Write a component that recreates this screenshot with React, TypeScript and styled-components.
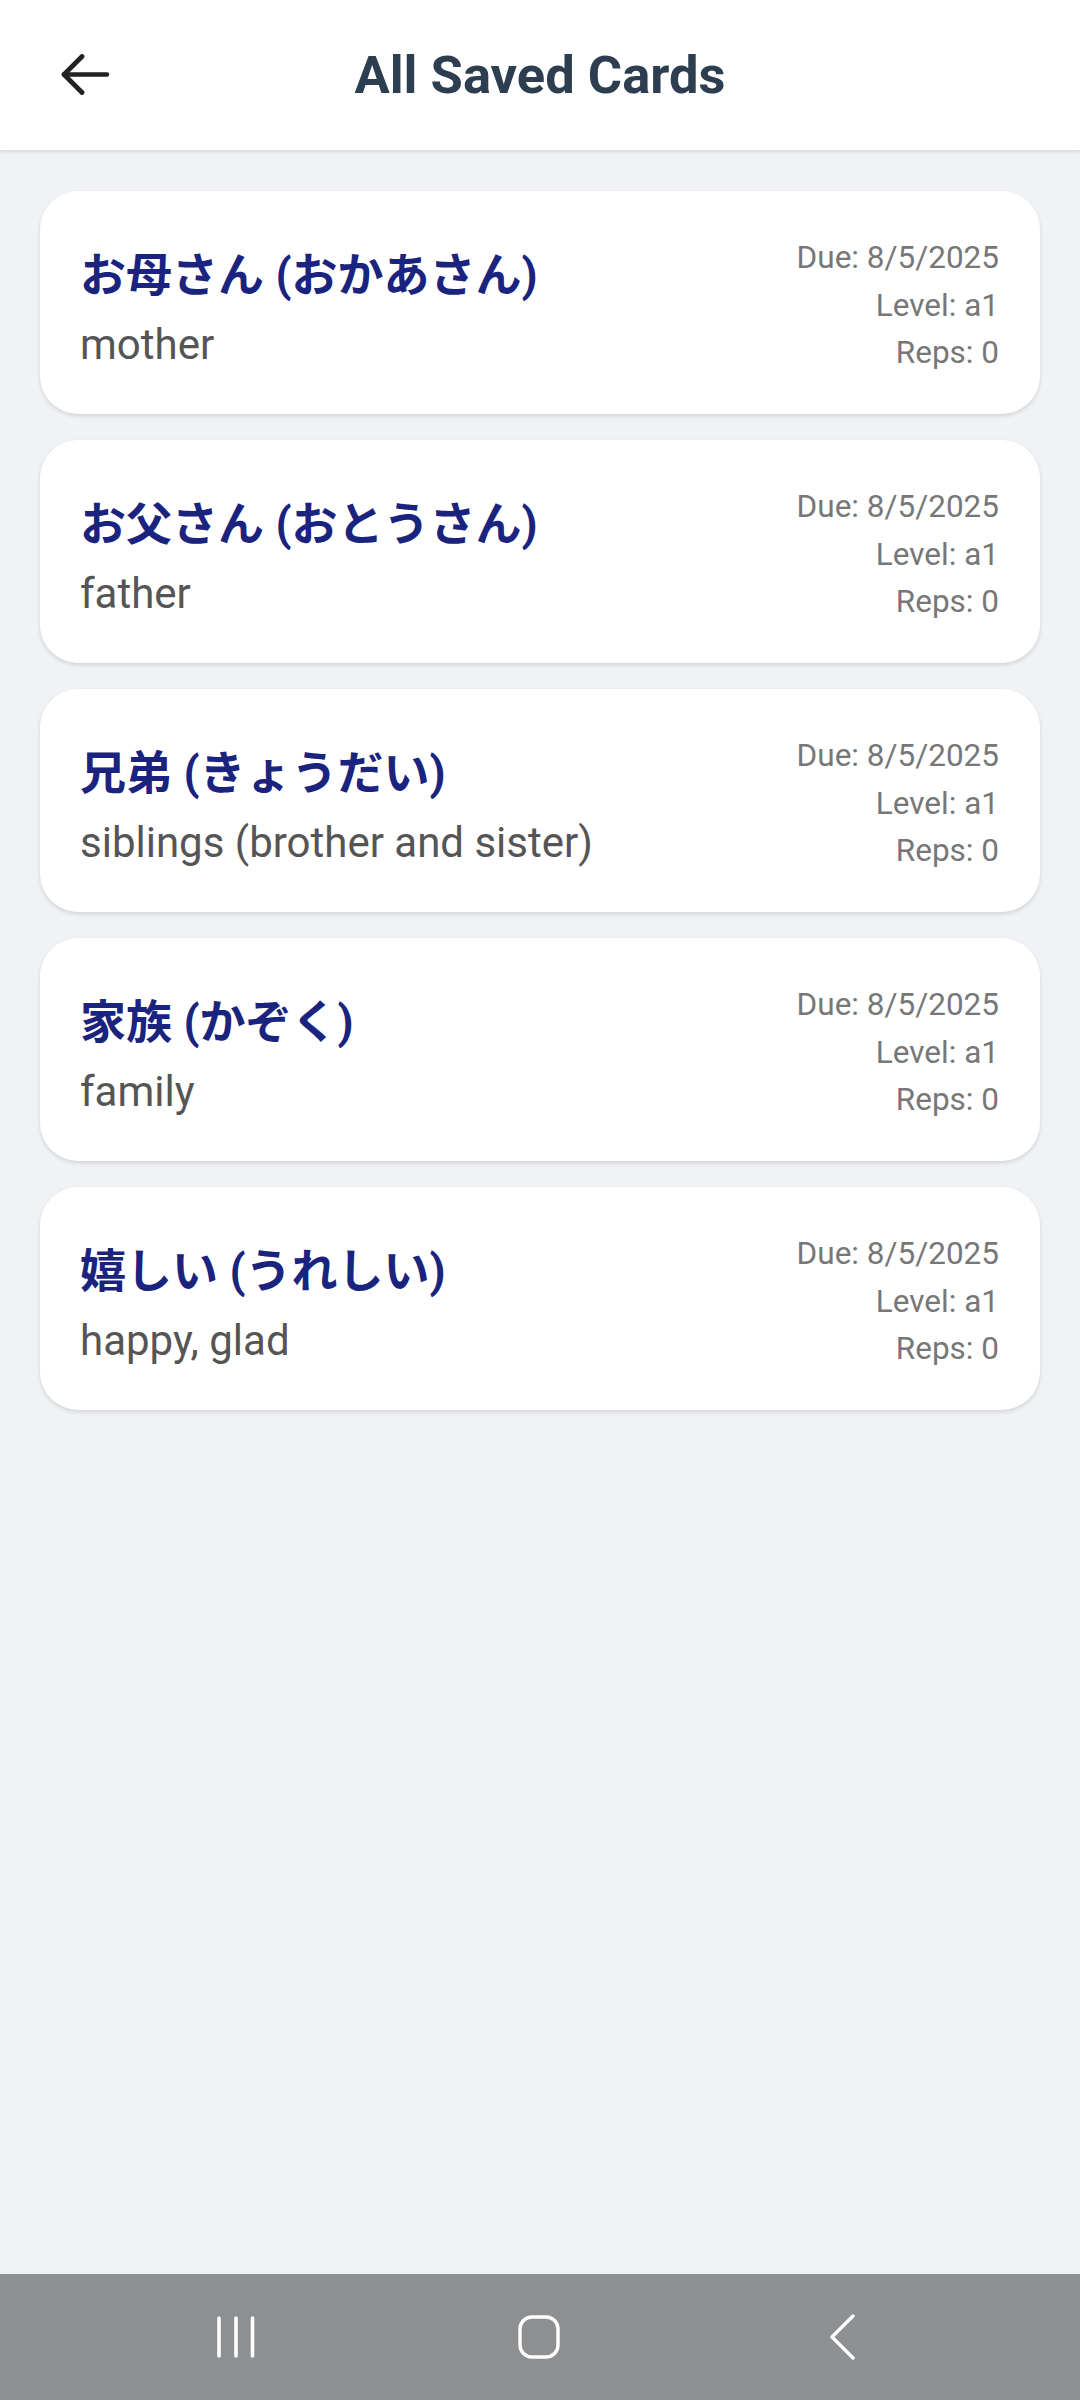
import React from "react";
import styled, { createGlobalStyle } from "styled-components";

const GlobalStyle = createGlobalStyle`
  html, body {
    margin: 0;
    padding: 0;
    background: #f0f2f5;
  }
  * { box-sizing: border-box; }
  body {
    font-family: Roboto, "Noto Sans CJK JP", sans-serif;
  }
`;

const Screen = styled.div`
  width: 1080px;
  height: 2400px;
  display: flex;
  flex-direction: column;
  background: #f0f2f5;
`;

const Header = styled.header`
  height: 150px;
  flex-shrink: 0;
  background: #ffffff;
  display: grid;
  grid-template-columns: 1fr auto 1fr;
  align-items: center;
  box-shadow: 0 2px 3px rgba(0, 0, 0, 0.1);
  position: relative;
  z-index: 1;
`;

const BackButton = styled.button`
  justify-self: start;
  margin-left: 60px;
  width: 58px;
  height: 50px;
  border: none;
  background: transparent;
  padding: 0;
  display: flex;
  align-items: center;
  justify-content: flex-start;
  cursor: pointer;
`;

const Title = styled.h1`
  margin: 0;
  font-family: Roboto, "Noto Sans CJK JP", sans-serif;
  font-weight: 700;
  font-size: 52.5px;
  line-height: 62px;
  color: #2c3e50;
`;

const List = styled.main`
  flex: 1;
  display: flex;
  flex-direction: column;
  gap: 26px;
  padding: 41px 40px;
`;

const Card = styled.div`
  background: #ffffff;
  border-radius: 38px;
  min-height: 223px;
  padding: 0 41px 0 40px;
  display: flex;
  align-items: center;
  justify-content: space-between;
  box-shadow: 0 2px 4px rgba(0, 0, 0, 0.13);
`;

const Left = styled.div`
  display: flex;
  flex-direction: column;
  gap: 17px;
  margin-top: 12px;
`;

const Word = styled.div`
  font-family: Roboto, "Noto Sans CJK JP", sans-serif;
  font-weight: 700;
  font-size: 46px;
  line-height: 56px;
  color: #1a237e;
`;

const Meaning = styled.div`
  font-family: Roboto, sans-serif;
  font-size: 42px;
  line-height: 50px;
  color: #555555;
`;

const Meta = styled.div`
  display: flex;
  flex-direction: column;
  align-items: flex-end;
  margin-top: 6px;
`;

const MetaLine = styled.div`
  font-family: Roboto, sans-serif;
  font-size: 31.5px;
  line-height: 47.5px;
  color: #777777;
`;

const NavBar = styled.nav`
  height: 126px;
  flex-shrink: 0;
  background: #8e8f91;
  display: flex;
  align-items: center;
  justify-content: space-between;
  padding: 0 208px 0 206px;
`;

const NavSlot = styled.div`
  width: 60px;
  height: 60px;
  display: flex;
  align-items: center;
  justify-content: center;
`;

type CardData = {
  word: string;
  meaning: string;
  due: string;
  level: string;
  reps: number;
};

const cards: CardData[] = [
  { word: "お母さん (おかあさん)", meaning: "mother", due: "8/5/2025", level: "a1", reps: 0 },
  { word: "お父さん (おとうさん)", meaning: "father", due: "8/5/2025", level: "a1", reps: 0 },
  { word: "兄弟 (きょうだい)", meaning: "siblings (brother and sister)", due: "8/5/2025", level: "a1", reps: 0 },
  { word: "家族 (かぞく)", meaning: "family", due: "8/5/2025", level: "a1", reps: 0 },
  { word: "嬉しい (うれしい)", meaning: "happy, glad", due: "8/5/2025", level: "a1", reps: 0 },
];

const BackArrow = () => (
  <svg width="50" height="42" viewBox="0 0 50 42" fill="none">
    <path d="M4 20.5 H47" stroke="#222222" strokeWidth="4.4" strokeLinecap="round" />
    <path d="M22 2.5 L4 20.5 L22 38.5" stroke="#222222" strokeWidth="4.8" strokeLinecap="round" strokeLinejoin="round" />
  </svg>
);

const RecentsIcon = () => (
  <svg width="44" height="46" viewBox="0 0 44 46" fill="none">
    <path d="M5 4 V42 M22 4 V42 M38.5 4 V42" stroke="#ffffff" strokeWidth="3.6" strokeLinecap="round" />
  </svg>
);

const HomeIcon = () => (
  <svg width="44" height="46" viewBox="0 0 44 46" fill="none">
    <rect x="3" y="3" width="38" height="40" rx="12" stroke="#ffffff" strokeWidth="3.4" />
  </svg>
);

const BackNavIcon = () => (
  <svg width="30" height="46" viewBox="0 0 30 46" fill="none">
    <path d="M26 2 L5 23 L26 44" stroke="#ffffff" strokeWidth="3.4" strokeLinecap="round" strokeLinejoin="round" />
  </svg>
);

export default function App() {
  return (
    <>
      <GlobalStyle />
      <Screen>
        <Header>
          <BackButton aria-label="Back">
            <BackArrow />
          </BackButton>
          <Title>All Saved Cards</Title>
          <div />
        </Header>
        <List>
          {cards.map((c) => (
            <Card key={c.word}>
              <Left>
                <Word>{c.word}</Word>
                <Meaning>{c.meaning}</Meaning>
              </Left>
              <Meta>
                <MetaLine>Due: {c.due}</MetaLine>
                <MetaLine>Level: {c.level}</MetaLine>
                <MetaLine>Reps: {c.reps}</MetaLine>
              </Meta>
            </Card>
          ))}
        </List>
        <NavBar>
          <NavSlot>
            <RecentsIcon />
          </NavSlot>
          <NavSlot>
            <HomeIcon />
          </NavSlot>
          <NavSlot>
            <BackNavIcon />
          </NavSlot>
        </NavBar>
      </Screen>
    </>
  );
}
